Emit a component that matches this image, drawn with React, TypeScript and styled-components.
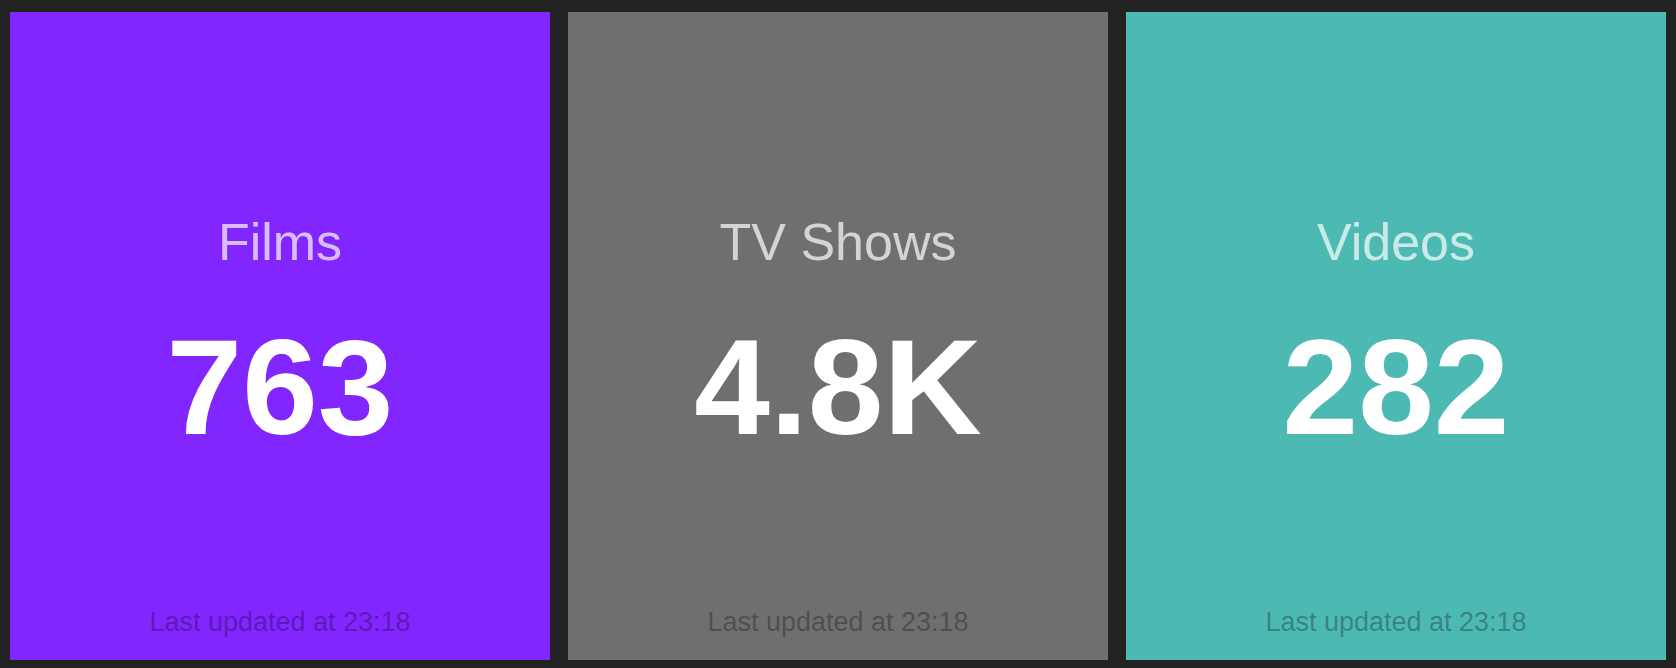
import React from "react";
import styled, { createGlobalStyle } from "styled-components";

const Global = createGlobalStyle`
  html, body {
    margin: 0;
    padding: 0;
    background: #222222;
  }
  body {
    font-family: "Liberation Sans", Arial, Helvetica, sans-serif;
  }
`;

const Board = styled.main`
  box-sizing: border-box;
  width: 1676px;
  height: 668px;
  padding: 12px 10px 8px 10px;
  display: grid;
  grid-template-columns: repeat(3, 540px);
  column-gap: 18px;
  background: #222222;
`;

const Widget = styled.section<{ $bg: string }>`
  box-sizing: border-box;
  background: ${(p) => p.$bg};
  display: flex;
  flex-direction: column;
  align-items: center;
  padding: 204px 0 24px;
  text-align: center;
`;

const Title = styled.h1`
  margin: 0;
  font-size: 52px;
  line-height: 52px;
  font-weight: 400;
  color: rgba(255, 255, 255, 0.7);
`;

const Value = styled.p`
  margin: 51px 0 0;
  font-size: 136px;
  line-height: 136px;
  font-weight: 700;
  color: #ffffff;
`;

const Updated = styled.p`
  margin: auto 0 0;
  font-size: 27px;
  line-height: 27px;
  font-weight: 400;
  color: rgba(0, 0, 0, 0.3);
`;

const widgets = [
  { title: "Films", value: "763", bg: "#8126fe" },
  { title: "TV Shows", value: "4.8K", bg: "#6f6f6f" },
  { title: "Videos", value: "282", bg: "#4db9b3" },
];

export default function App() {
  return (
    <>
      <Global />
      <Board>
        {widgets.map((w) => (
          <Widget key={w.title} $bg={w.bg}>
            <Title>{w.title}</Title>
            <Value>{w.value}</Value>
            <Updated>Last updated at 23:18</Updated>
          </Widget>
        ))}
      </Board>
    </>
  );
}
